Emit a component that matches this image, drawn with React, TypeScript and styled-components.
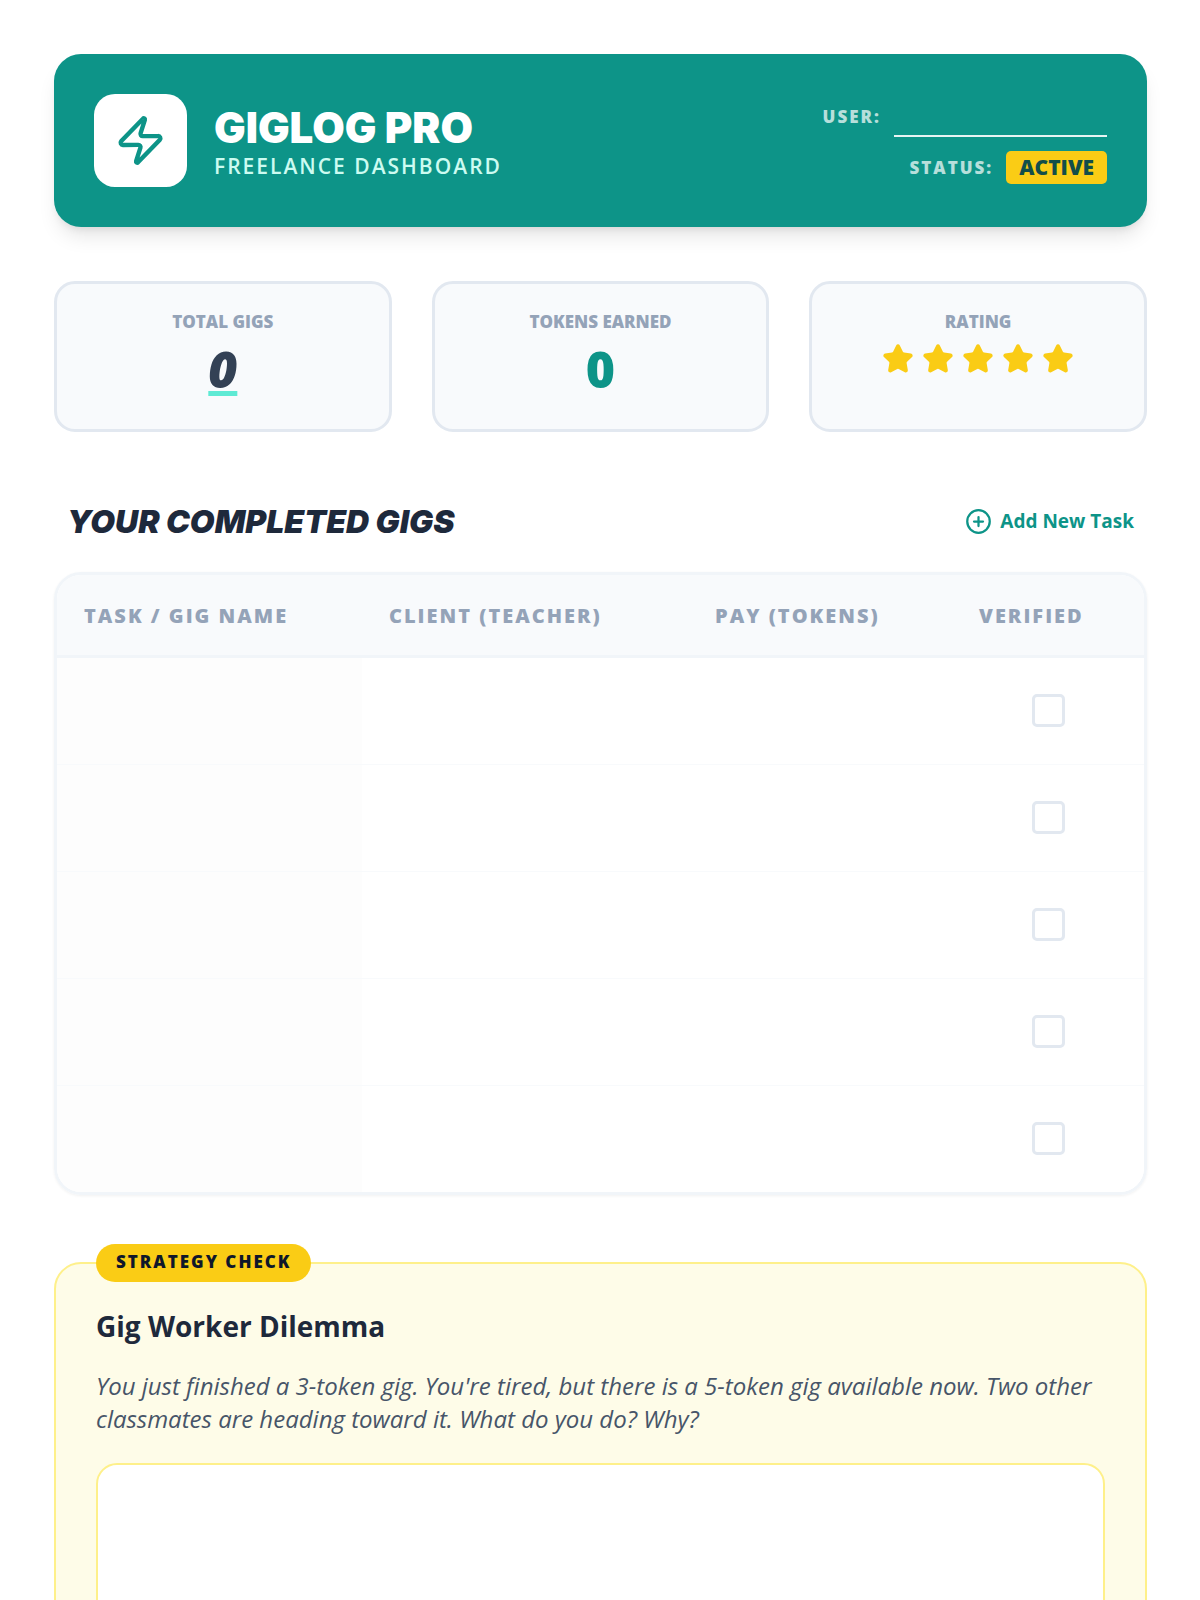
import React from "react";
import styled, { createGlobalStyle } from "styled-components";
import { CirclePlus, Star, Zap } from "lucide-react";

const body = `"Open Sans", "Noto Sans", sans-serif`;
const display = `Inter, "Open Sans", sans-serif`;

const color = {
  teal: "#0d9488",
  tealDark: "#134e4a",
  tealSoft: "#5eead4",
  mint: "#ccfbf1",
  yellow: "#facc15",
  cream: "#fefce8",
  creamLine: "#fef08a",
  ink: "#1e293b",
  slate: "#334155",
  prose: "#475569",
  muted: "#94a3b8",
  line: "#e2e8f0",
  lineSoft: "#f1f5f9",
  surface: "#f8fafc",
};

const GlobalStyle = createGlobalStyle`
  *, *::before, *::after { box-sizing: border-box; }
  body {
    margin: 0;
    background: #fff;
    color: ${color.ink};
    font-family: ${body};
  }
`;

const Page = styled.main`
  padding: 54px 53px 54px 54px;
`;

const Header = styled.header`
  display: flex;
  justify-content: space-between;
  align-items: center;
  padding: 40px;
  border-radius: 27px;
  background: ${color.teal};
  color: #fff;
  box-shadow: 0 13px 20px -4px rgba(0, 0, 0, 0.1), 0 5px 8px -4px rgba(0, 0, 0, 0.1);
`;

const Brand = styled.div`
  display: flex;
  align-items: center;
  gap: 27px;
`;

const Logo = styled.div`
  display: grid;
  place-items: center;
  width: 93px;
  height: 93px;
  border-radius: 21px;
  background: #fff;
  color: ${color.teal};
`;

const Title = styled.h1`
  margin: 0;
  font-family: ${display};
  font-size: 42px;
  line-height: 51px;
  font-weight: 900;
`;

const Subtitle = styled.p`
  margin: 0;
  color: ${color.mint};
  font-size: 21px;
  line-height: 27px;
  font-weight: 600;
  letter-spacing: 2px;
`;

const Account = styled.div`
  display: flex;
  flex-direction: column;
  align-items: flex-end;
  gap: 14px;
`;

const Field = styled.div`
  display: flex;
  align-items: center;
  gap: 13px;
`;

const FieldLabel = styled.label`
  font-size: 17px;
  line-height: 22px;
  font-weight: 800;
  letter-spacing: 2px;
  opacity: 0.7;
`;

const UserInput = styled.input`
  width: 213px;
  height: 40px;
  padding: 0;
  border: 0;
  border-bottom: 2px solid #e7f4f3;
  border-radius: 0;
  outline: 0;
  background: transparent;
  color: #fff;
  font: 600 20px/27px ${body};
`;

const StatusBadge = styled.output`
  padding: 3px 13px;
  border-radius: 5px;
  background: ${color.yellow};
  color: ${color.tealDark};
  font-size: 21px;
  line-height: 27px;
  font-weight: 800;
`;

const Stats = styled.section`
  display: grid;
  grid-template-columns: repeat(3, 1fr);
  gap: 40px;
  margin-top: 54px;
`;

const StatCard = styled.div`
  display: flex;
  flex-direction: column;
  align-items: center;
  padding: 27px;
  border: 3px solid ${color.line};
  border-radius: 21px;
  background: ${color.surface};
`;

const StatLabel = styled.span`
  color: ${color.muted};
  font-size: 17px;
  line-height: 22px;
  font-weight: 800;
`;

const StatValue = styled.strong<{ $accent?: boolean }>`
  margin: 4px 0 1px;
  font-size: 50px;
  line-height: 64px;
  font-weight: 800;
  color: ${(p) => (p.$accent ? color.teal : color.slate)};
  font-style: ${(p) => (p.$accent ? "normal" : "italic")};
  text-decoration: ${(p) => (p.$accent ? "none" : `underline 5px ${color.tealSoft}`)};
  text-decoration-skip-ink: none;
  text-underline-offset: 3px;
`;

const Stars = styled.div`
  display: flex;
  gap: 8px;
  margin-top: 10px;
  color: ${color.yellow};
`;

const SectionHead = styled.div`
  display: flex;
  justify-content: space-between;
  align-items: center;
  margin: 68px 0 29px;
  padding: 0 13px;
`;

const SectionTitle = styled.h2`
  margin: 0;
  font-family: ${display};
  font-size: 32px;
  line-height: 43px;
  font-weight: 900;
  font-style: italic;
`;

const AddButton = styled.button`
  display: flex;
  align-items: center;
  gap: 8px;
  padding: 0;
  border: 0;
  background: none;
  color: ${color.teal};
  font: 700 19px/27px ${body};
  cursor: pointer;
`;

const TableFrame = styled.div`
  overflow: hidden;
  border: 3px solid ${color.lineSoft};
  border-radius: 27px;
  box-shadow: 0 1px 3px rgba(0, 0, 0, 0.06);
`;

const GigTable = styled.table`
  width: 100%;
  table-layout: fixed;
  border-collapse: separate;
  border-spacing: 0;
`;

const Col = styled.col<{ $width: number }>`
  width: ${(p) => p.$width}px;
`;

const HeadCell = styled.th`
  padding: 27px 27px 26px;
  border-bottom: 3px solid ${color.lineSoft};
  background: ${color.surface};
  color: ${color.muted};
  text-align: left;
  white-space: nowrap;
  font-size: 20px;
  line-height: 27px;
  font-weight: 800;
  letter-spacing: 2px;
`;

const Row = styled.tr`
  &:not(:last-child) td {
    border-bottom: 1px solid ${color.surface};
  }
`;

const Cell = styled.td<{ $shaded?: boolean }>`
  box-sizing: content-box;
  height: 104px;
  padding: 0 27px 2px;
  text-align: center;
  background: ${(p) => (p.$shaded ? "#fdfdfd" : "#fff")};
`;

const Tick = styled.input`
  display: block;
  appearance: none;
  width: 33px;
  height: 33px;
  margin: 0 auto;
  border: 3px solid ${color.line};
  border-radius: 5px;
  background: #fff;

  &:checked {
    background: ${color.teal};
  }
`;

const Strategy = styled.section`
  position: relative;
  margin-top: 67px;
  padding: 41px 40px 40px;
  border: 2px solid ${color.creamLine};
  border-radius: 27px;
  background: ${color.cream};
`;

const StrategyTag = styled.span`
  position: absolute;
  top: -20px;
  left: 40px;
  padding: 7px 20px 9px;
  border-radius: 19px;
  background: ${color.yellow};
  color: #0f172a;
  font-size: 17px;
  line-height: 22px;
  font-weight: 800;
  letter-spacing: 2px;
`;

const StrategyTitle = styled.h3`
  margin: 0 0 21px;
  font-size: 28px;
  line-height: 43px;
  font-weight: 700;
`;

const StrategyText = styled.p`
  margin: 0 0 28px;
  color: ${color.prose};
  font-size: 24px;
  line-height: 33px;
  font-style: italic;
`;

const Answer = styled.textarea`
  display: block;
  width: 100%;
  height: 213px;
  padding: 20px;
  border: 2px solid ${color.creamLine};
  border-radius: 21px;
  outline: 0;
  resize: none;
  background: #fff;
  color: ${color.ink};
  font: 400 24px/33px ${body};
`;

const columns = [
  { name: "TASK / GIG NAME", width: 305 },
  { name: "CLIENT (TEACHER)", width: 326 },
  { name: "PAY (TOKENS)", width: 264 },
  { name: "VERIFIED", width: 193 },
];

const rows = [1, 2, 3, 4, 5];

export default function App() {
  return (
    <>
      <GlobalStyle />
      <Page>
        <Header>
          <Brand>
            <Logo>
              <Zap size={53} strokeWidth={2} aria-hidden />
            </Logo>
            <div>
              <Title>GIGLOG PRO</Title>
              <Subtitle>FREELANCE DASHBOARD</Subtitle>
            </div>
          </Brand>
          <Account>
            <Field>
              <FieldLabel htmlFor="user">USER:</FieldLabel>
              <UserInput id="user" type="text" />
            </Field>
            <Field>
              <FieldLabel htmlFor="status">STATUS:</FieldLabel>
              <StatusBadge id="status">ACTIVE</StatusBadge>
            </Field>
          </Account>
        </Header>

        <Stats>
          <StatCard>
            <StatLabel>TOTAL GIGS</StatLabel>
            <StatValue>0</StatValue>
          </StatCard>
          <StatCard>
            <StatLabel>TOKENS EARNED</StatLabel>
            <StatValue $accent>0</StatValue>
          </StatCard>
          <StatCard>
            <StatLabel>RATING</StatLabel>
            <Stars role="img" aria-label="5 of 5">
              {rows.map((n) => (
                <Star key={n} size={32} fill="currentColor" aria-hidden />
              ))}
            </Stars>
          </StatCard>
        </Stats>

        <SectionHead>
          <SectionTitle>YOUR COMPLETED GIGS</SectionTitle>
          <AddButton type="button">
            <CirclePlus size={27} aria-hidden />
            Add New Task
          </AddButton>
        </SectionHead>

        <TableFrame>
          <GigTable>
            <colgroup>
              {columns.map((c) => (
                <Col key={c.name} $width={c.width} />
              ))}
            </colgroup>
            <thead>
              <tr>
                {columns.map((c) => (
                  <HeadCell key={c.name} scope="col">
                    {c.name}
                  </HeadCell>
                ))}
              </tr>
            </thead>
            <tbody>
              {rows.map((n) => (
                <Row key={n}>
                  <Cell $shaded />
                  <Cell />
                  <Cell />
                  <Cell>
                    <Tick type="checkbox" aria-label="VERIFIED" />
                  </Cell>
                </Row>
              ))}
            </tbody>
          </GigTable>
        </TableFrame>

        <Strategy>
          <StrategyTag>STRATEGY CHECK</StrategyTag>
          <StrategyTitle id="dilemma">Gig Worker Dilemma</StrategyTitle>
          <StrategyText>
            You just finished a 3-token gig. You're tired, but there is a 5-token gig available now. Two other
            classmates are heading toward it. What do you do? Why?
          </StrategyText>
          <Answer aria-labelledby="dilemma" />
        </Strategy>
      </Page>
    </>
  );
}
